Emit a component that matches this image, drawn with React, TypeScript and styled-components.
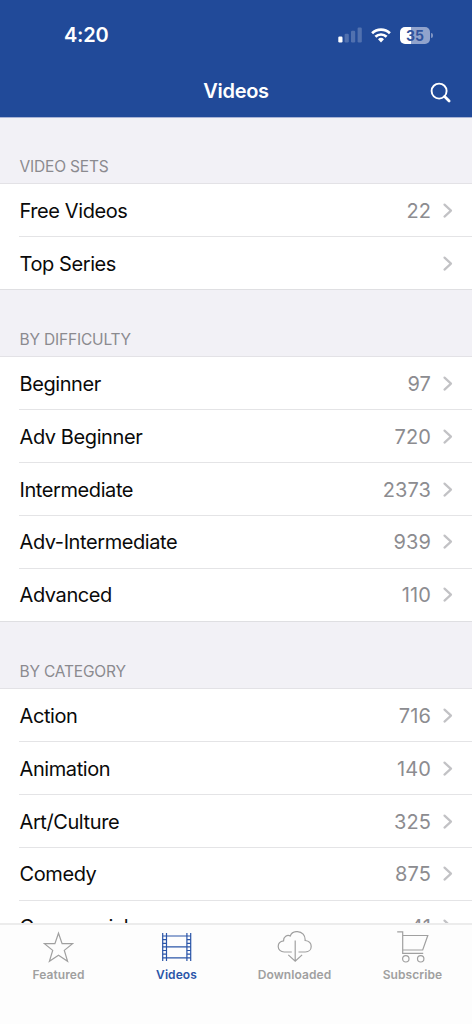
import React from 'react';
import styled, { createGlobalStyle } from 'styled-components';

const GlobalStyle = createGlobalStyle`
  * { box-sizing: border-box; }
  body {
    margin: 0;
    background: #fff;
    font-family: Inter, "Liberation Sans", sans-serif;
    -webkit-font-smoothing: antialiased;
  }
`;

const Screen = styled.div`
  width: 472px;
  height: 1024px;
  display: flex;
  flex-direction: column;
  overflow: hidden;
  background: #fff;
`;

const Header = styled.header`
  flex: none;
  height: 118px;
  background: #214a99;
  border-bottom: 1px solid #a9b4d6;
  color: #fff;
`;

const StatusBar = styled.div`
  height: 64px;
  padding: 6px 39px 0 64px;
  display: flex;
  align-items: center;
  justify-content: space-between;
`;

const Clock = styled.span`
  font-size: 20px;
  line-height: 24px;
  font-weight: 600;
  letter-spacing: -0.25px;
`;

const StatusIcons = styled.div`
  display: flex;
  align-items: center;
  gap: 8px;
`;

const Battery = styled.div`
  display: flex;
  align-items: center;
  gap: 1px;
`;

const BatteryBody = styled.div`
  width: 30px;
  height: 17px;
  border-radius: 5px;
  background: linear-gradient(90deg, #fff 11px, #91a3cc 11px);
  color: #31549d;
  font-size: 14px;
  line-height: 17px;
  font-weight: 700;
  text-align: center;
`;

const BatteryCap = styled.div`
  width: 2px;
  height: 5px;
  border-radius: 0 2px 2px 0;
  background: #7f94c3;
`;

const NavBar = styled.div`
  height: 53px;
  display: grid;
  grid-template-columns: 1fr auto 1fr;
  align-items: center;
  padding-right: 20px;
  padding-left: 20px;
`;

const Title = styled.h1`
  grid-column: 2;
  margin: 0;
  padding-top: 1px;
  font-size: 20px;
  line-height: 24px;
  font-weight: 600;
  letter-spacing: -0.3px;
`;

const SearchButton = styled.button`
  justify-self: end;
  display: flex;
  padding: 5px 0 0;
  border: 0;
  background: none;
  color: inherit;
`;

const List = styled.main`
  flex: 1;
  min-height: 0;
  overflow: hidden;
`;

const SectionTitle = styled.h2<{ $first?: boolean }>`
  margin: 0;
  height: ${(p) => (p.$first ? 66 : 67)}px;
  padding: 0 19.5px 5px;
  display: flex;
  align-items: flex-end;
  background: #f2f1f6;
  border-bottom: 1px solid #e3e2e6;
  color: #8b8a8f;
  font-size: 15.5px;
  line-height: 22px;
  font-weight: 400;
  letter-spacing: -0.18px;
  text-transform: uppercase;
`;

const Rows = styled.div`
  border-bottom: 1px solid #dfdfe2;
`;

const Row = styled.div`
  height: 53px;
  margin-left: 19px;
  padding-top: 2px;
  padding-right: 19px;
  display: flex;
  align-items: center;
  border-bottom: 1px solid #e4e4e6;
  &:nth-child(n + 4) {
    padding-top: 0;
  }
  &:last-child {
    height: 52px;
    border-bottom: 0;
  }
`;

const Label = styled.span`
  flex: 1;
  padding-left: 0.5px;
  font-size: 20px;
  line-height: 26px;
  color: #0a0a0a;
  letter-spacing: -0.41px;
`;

const Count = styled.span`
  margin-right: 11px;
  font-size: 20px;
  line-height: 26px;
  color: #8c8c90;
  letter-spacing: 0.1px;
`;

const TabBar = styled.nav`
  flex: none;
  height: 101px;
  padding-top: 6px;
  display: grid;
  grid-template-columns: repeat(4, 1fr);
  align-items: start;
  background: #fdfdfd;
  border-top: 2px solid #ececec;
`;

const Tab = styled.div<{ $active?: boolean }>`
  display: flex;
  flex-direction: column;
  align-items: center;
  color: ${(p) => (p.$active ? '#2a55a8' : '#a0a0a0')};
`;

const TabLabel = styled.span`
  margin-top: 2px;
  margin-right: 1px;
  font-size: 12px;
  line-height: 16px;
  font-weight: 600;
  letter-spacing: 0.08px;
`;

const SignalIcon = () => (
  <svg width="25" height="16" viewBox="0 0 25 16" fill="#fff">
    <rect x="0.3" y="9.5" width="4.2" height="6" rx="1.2" />
    <rect x="6.6" y="6.8" width="4.2" height="8.7" rx="1.2" opacity=".22" />
    <rect x="13" y="3.8" width="4.2" height="11.7" rx="1.2" opacity=".22" />
    <rect x="19.6" y="0.5" width="4.2" height="15" rx="1.2" opacity=".22" />
  </svg>
);

const WifiIcon = () => (
  <svg width="21" height="15" viewBox="0 0 21 15" fill="none" stroke="#fff" strokeWidth="2.7">
    <path d="M1.1 5.3a12.7 12.7 0 0 1 17.8 0" />
    <path d="M4.4 8.8a8 8 0 0 1 11.2 0" />
    <path d="M7 11.2a4.4 4.4 0 0 1 6 0L10 14.6z" fill="#fff" stroke="none" />
  </svg>
);

const SearchIcon = () => (
  <svg width="22" height="22" viewBox="0 0 22 22" fill="none" stroke="currentColor" strokeLinecap="round">
    <circle cx="9.1" cy="9.1" r="7.5" strokeWidth="1.9" />
    <path d="M14.6 14.6L19.1 19.1" strokeWidth="2.8" />
  </svg>
);

const Chevron = () => (
  <svg width="11" height="16" viewBox="0 0 11 16" fill="none" stroke="#c2c2c5" strokeWidth="2.2" strokeLinecap="round" strokeLinejoin="round">
    <path d="M2.5 1.6L9 7.6L2.5 13.6" />
  </svg>
);

const iconProps = {
  width: 36,
  height: 34,
  viewBox: '0 0 36 34',
  fill: 'none',
  stroke: 'currentColor',
  strokeWidth: 1.2,
};

const StarIcon = () => (
  <svg {...iconProps}>
    <path d="M17.5 2.2L21.1 12.6H31.6L23.3 19.4L26.6 30.3L17.5 24.2L8.4 30.3L11.7 19.4L3.4 12.6H13.9Z" />
  </svg>
);

const FilmIcon = () => (
  <svg {...iconProps}>
    <path d="M3.7 2V30M7.5 2V30M27.9 2V30M31.7 2V30" />
    <path d="M7.5 5H27.9M7.5 15.9H27.9M7.5 26.8H27.9" />
    <path d="M3.7 5H7.5M3.7 8.6H7.5M3.7 12.3H7.5M3.7 15.9H7.5M3.7 19.5H7.5M3.7 23.2H7.5M3.7 26.8H7.5M27.9 5H31.7M27.9 8.6H31.7M27.9 12.3H31.7M27.9 15.9H31.7M27.9 19.5H31.7M27.9 23.2H31.7M27.9 26.8H31.7" />
  </svg>
);

const CloudIcon = () => (
  <svg {...iconProps}>
    <path d="M14.8 21H7.2C3.7 21 1.2 18.5 1.2 15.4C1.2 12.4 3.3 10.3 6.6 9.8C6.4 5.8 10.3 3.3 13.2 5C14.4 1.8 17.2.4 20.4.6C25.1.8 28.5 4.2 28.1 9.5C31.8 10 34.2 12.4 34.2 15.5C34.2 18.6 31.8 21 28.3 21H21.5" />
    <path d="M18.2 9.5V30.3M11.3 23.9L18.2 30.3L25.1 23.9" />
  </svg>
);

const CartIcon = () => (
  <svg {...iconProps}>
    <path d="M2.2 .8H7.7V22.4H28.2M7.7 4.5H32.8L27.7 19H7.7" />
    <circle cx="10.8" cy="27.8" r="3.2" />
    <circle cx="25.7" cy="27.8" r="3.2" />
  </svg>
);

type Item = { label: string; count?: number };

const sections: { title: string; items: Item[] }[] = [
  {
    title: 'Video Sets',
    items: [{ label: 'Free Videos', count: 22 }, { label: 'Top Series' }],
  },
  {
    title: 'By Difficulty',
    items: [
      { label: 'Beginner', count: 97 },
      { label: 'Adv Beginner', count: 720 },
      { label: 'Intermediate', count: 2373 },
      { label: 'Adv-Intermediate', count: 939 },
      { label: 'Advanced', count: 110 },
    ],
  },
  {
    title: 'By Category',
    items: [
      { label: 'Action', count: 716 },
      { label: 'Animation', count: 140 },
      { label: 'Art/Culture', count: 325 },
      { label: 'Comedy', count: 875 },
      { label: 'Commercial', count: 41 },
    ],
  },
];

const tabs = [
  { label: 'Featured', Icon: StarIcon },
  { label: 'Videos', Icon: FilmIcon, active: true },
  { label: 'Downloaded', Icon: CloudIcon },
  { label: 'Subscribe', Icon: CartIcon },
];

export default function App() {
  return (
    <>
      <GlobalStyle />
      <Screen>
        <Header>
          <StatusBar>
            <Clock>4:20</Clock>
            <StatusIcons>
              <SignalIcon />
              <WifiIcon />
              <Battery>
                <BatteryBody>35</BatteryBody>
                <BatteryCap />
              </Battery>
            </StatusIcons>
          </StatusBar>
          <NavBar>
            <Title>Videos</Title>
            <SearchButton aria-label="Search">
              <SearchIcon />
            </SearchButton>
          </NavBar>
        </Header>
        <List>
          {sections.map((section, i) => (
            <section key={section.title}>
              <SectionTitle $first={i === 0}>{section.title}</SectionTitle>
              <Rows>
                {section.items.map((item) => (
                  <Row key={item.label}>
                    <Label>{item.label}</Label>
                    {item.count !== undefined && <Count>{item.count}</Count>}
                    <Chevron />
                  </Row>
                ))}
              </Rows>
            </section>
          ))}
        </List>
        <TabBar>
          {tabs.map(({ label, Icon, active }) => (
            <Tab key={label} $active={active}>
              <Icon />
              <TabLabel>{label}</TabLabel>
            </Tab>
          ))}
        </TabBar>
      </Screen>
    </>
  );
}
